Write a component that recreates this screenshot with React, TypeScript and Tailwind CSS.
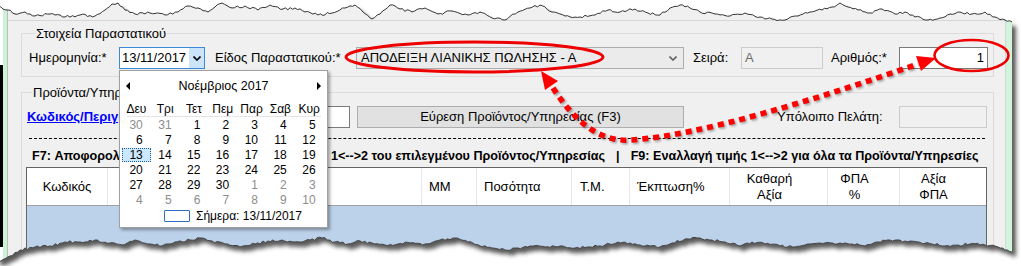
import React from "react";

type Pt = [number, number];

const topCtrl: Pt[] = [
  [-4, 6], [8, 10], [15, 14], [25, 12], [35, 16], [50, 14], [65, 17], [80, 15], [95, 16], [105, 10], [112, 4], [118, 3],
  [125, 10], [135, 14], [150, 13], [165, 15], [178, 12], [188, 6], [198, 8], [208, 12], [215, 7], [222, 3], [232, 8],
  [245, 6], [258, 10], [270, 5], [283, 9], [295, 8], [305, 12], [318, 15], [332, 13], [345, 8], [355, 5], [363, 12],
  [372, 19], [380, 14], [390, 5], [400, 9], [412, 12], [425, 8], [438, 14], [452, 11], [468, 15], [480, 12], [492, 18],
  [505, 20], [518, 12], [530, 8], [540, 5], [552, 12], [565, 16], [580, 17], [595, 15], [608, 10], [620, 12], [635, 9],
  [648, 13], [660, 15], [670, 8], [680, 5], [690, 8], [700, 12], [715, 14], [730, 16], [745, 13], [760, 17], [772, 19],
  [785, 20], [798, 16], [810, 12], [822, 10], [832, 7], [840, 3], [848, 7], [858, 10], [870, 13], [882, 9], [895, 14],
  [905, 12], [915, 17], [928, 20], [940, 18], [950, 14], [960, 12], [972, 14], [985, 12], [995, 17], [1005, 20], [1012, 22],
];

const bottomCtrl: Pt[] = [
  [-4, 262], [10, 256], [20, 250], [35, 247], [50, 246], [65, 242], [80, 242], [95, 240], [110, 243], [122, 245],
  [135, 240], [150, 244], [162, 246], [175, 242], [190, 240], [200, 238], [212, 241], [225, 244], [240, 247], [255, 244],
  [268, 241], [282, 240], [295, 242], [310, 240], [322, 238], [335, 242], [348, 244], [360, 241], [372, 243], [385, 245],
  [398, 244], [410, 243], [425, 244], [440, 240], [455, 238], [468, 242], [480, 246], [492, 248], [505, 250], [518, 248],
  [530, 246], [545, 247], [560, 246], [575, 248], [590, 247], [605, 245], [618, 242], [630, 243], [645, 246], [660, 247],
  [672, 243], [685, 239], [700, 238], [712, 240], [725, 242], [740, 246], [752, 242], [765, 244], [780, 246], [795, 247],
  [810, 244], [825, 243], [840, 243], [852, 244], [865, 246], [878, 242], [890, 240], [905, 241], [918, 242], [932, 244],
  [945, 246], [958, 245], [970, 244], [985, 245], [998, 247], [1005, 250], [1012, 252],
];

// break the control lines up into small jagged steps
function rough(ctrl: Pt[], seed: number, amp: number): Pt[] {
  let s = seed;
  const rnd = () => {
    s = (s * 16807) % 2147483647;
    return s / 2147483647;
  };
  const out: Pt[] = [];
  for (let i = 0; i < ctrl.length - 1; i++) {
    const [x0, y0] = ctrl[i];
    const [x1, y1] = ctrl[i + 1];
    const steps = Math.max(1, Math.round((x1 - x0) / 2.5));
    for (let k = 0; k < steps; k++) {
      const t = k / steps;
      const j = k === 0 ? 0 : (rnd() - 0.5) * amp;
      out.push([x0 + (x1 - x0) * t, y0 + (y1 - y0) * t + j]);
    }
  }
  out.push(ctrl[ctrl.length - 1]);
  return out;
}

const topPts = rough(topCtrl, 17, 2.4);
const bottomPts = rough(bottomCtrl, 91, 2.4);
const line = (pts: Pt[]) => pts.map(([x, y], i) => `${i ? "L" : "M"}${x.toFixed(1)},${y.toFixed(1)}`).join(" ");
const paper =
  line(topPts) +
  " " +
  [...bottomPts].reverse().map(([x, y]) => `L${x.toFixed(1)},${y.toFixed(1)}`).join(" ") +
  " Z";

const weeks: { d: number; out?: boolean }[][] = [
  [{ d: 30, out: true }, { d: 31, out: true }, { d: 1 }, { d: 2 }, { d: 3 }, { d: 4 }, { d: 5 }],
  [6, 7, 8, 9, 10, 11, 12].map((d) => ({ d })),
  [13, 14, 15, 16, 17, 18, 19].map((d) => ({ d })),
  [20, 21, 22, 23, 24, 25, 26].map((d) => ({ d })),
  [{ d: 27 }, { d: 28 }, { d: 29 }, { d: 30 }, { d: 1, out: true }, { d: 2, out: true }, { d: 3, out: true }],
  [4, 5, 6, 7, 8, 9, 10].map((d) => ({ d, out: true })),
];

const dayNames = ["Δευ", "Τρι", "Τετ", "Πεμ", "Παρ", "Σαβ", "Κυρ"];

function Chevron({ className }: { className?: string }) {
  return (
    <svg width="8" height="5" viewBox="0 0 8 5" className={className}>
      <polyline points="0.5,0.5 4,4 7.5,0.5" fill="none" stroke="currentColor" strokeWidth="1.6" />
    </svg>
  );
}

function Calendar() {
  return (
    <div className="absolute left-[119px] top-[70px] w-[209px] h-[158px] bg-white border border-[#a0a0a0] shadow-[2px_2px_3px_rgba(0,0,0,0.35)] text-[12px] leading-[14px] text-black">
      <div className="flex items-center justify-between h-[14px] mt-[8px] px-[6px]">
        <svg width="4" height="8" viewBox="0 0 4 8">
          <polygon points="4,0 0,4 4,8" fill="#000" />
        </svg>
        <span className="text-[12.5px]">Νοέμβριος 2017</span>
        <svg width="4" height="8" viewBox="0 0 4 8">
          <polygon points="0,0 4,4 0,8" fill="#000" />
        </svg>
      </div>
      <div className="ml-[2px] mt-[8px]">
        <div className="grid grid-cols-[repeat(7,28.8px)] h-[15px] items-center">
          {dayNames.map((n) => (
            <span key={n} className="text-center">
              {n}
            </span>
          ))}
        </div>
        <div className="h-px w-[194px] ml-[5px] bg-[#e4e4e4]" />
        {weeks.map((w, i) => (
          <div key={i} className="grid grid-cols-[repeat(7,28.8px)] h-[15px] items-center">
            {w.map((c, j) =>
              c.d === 13 && !c.out ? (
                <span key={j} className="h-[14px] text-right pr-[7px] bg-[#cce8ff] border border-dotted border-[#1c5e9e] leading-[12px]">
                  {c.d}
                </span>
              ) : (
                <span key={j} className={`text-right pr-[8px] ${c.out ? "text-[#8d8d8d]" : "text-black"}`}>
                  {c.d}
                </span>
              )
            )}
          </div>
        ))}
      </div>
      <div className="flex items-center h-[15px] mt-[1px] pl-[44px] gap-[6px]">
        <span className="w-[26px] h-[12px] border border-[#2a6fc4] rounded-[1px]" />
        <span>Σήμερα: 13/11/2017</span>
      </div>
    </div>
  );
}

const headers = [
  { label: ["Κωδικός"], cls: "w-[81px] justify-center" },
  { label: [""], cls: "w-[314px]" },
  { label: ["ΜΜ"], cls: "w-[55px] pl-[7px]" },
  { label: ["Ποσότητα"], cls: "w-[95px] pl-[7px]" },
  { label: ["Τ.Μ."], cls: "w-[58px] pl-[8px]" },
  { label: ["Έκπτωση%"], cls: "w-[100px] pl-[7px]" },
  { label: ["Καθαρή", "Αξία"], cls: "w-[98px] justify-center pr-[18px]" },
  { label: ["ΦΠΑ", "%"], cls: "w-[72px] justify-center pr-[18px]" },
  { label: ["Αξία", "ΦΠΑ"], cls: "flex-1 justify-center pr-[19px]" },
];

export default function App() {
  return (
    <div className="relative w-[1021px] h-[266px] overflow-hidden bg-white font-['Liberation_Sans',Arial,sans-serif] text-[13px] text-black">
      <div className="flex h-full w-[1012px]">
        <div className="w-[3px] flex flex-col">
          <div className="h-[65px] bg-white" />
          <div className="h-[182px] bg-black" />
        </div>
        <div className="w-[5px] bg-[#cef2d7] border-r border-[#bcbcbc]" />
        <div className="flex-1 bg-[#f0f0f0] pt-[20px]">
          <div className="h-full border-t border-r border-[#d6d6d6] pl-[13px] pr-[11px]">
            <fieldset className="mt-[5px] border border-[#dcdcdc] pl-[7px] pr-[4px] pb-[7px]">
              <legend className="ml-[6px] px-[1px] leading-[15px]">Στοιχεία Παραστατικού</legend>
              <div className="flex items-center h-[22px] mt-[6px]">
                <span className="w-[90px]">Ημερομηνία:*</span>
                <div className="flex w-[86px] h-[22px] border border-[#3b8ad9] bg-white">
                  <span className="flex-1 pl-[2px] leading-[20px]">13/11/2017</span>
                  <span className="w-[15px] bg-[#cce4f7] flex items-center justify-center text-black">
                    <Chevron />
                  </span>
                </div>
                <span className="ml-[10px] w-[141px]">Είδος Παραστατικού:*</span>
                <div className="flex items-center w-[328px] h-[22px] border border-[#adadad] bg-[#ebebeb] pl-[4px] pr-[6px]">
                  <span className="flex-1">ΑΠΟΔΕΙΞΗ ΛΙΑΝΙΚΗΣ ΠΩΛΗΣΗΣ - Α</span>
                  <Chevron className="text-[#606060]" />
                </div>
                <span className="ml-[9px] w-[48px]">Σειρά:</span>
                <div className="w-[82px] h-[22px] border border-[#cccccc] bg-[#f0f0f0] pl-[3px] leading-[20px] text-[#6d6d6d]">Α</div>
                <span className="ml-[8px] w-[68px]">Αριθμός:*</span>
                <div className="w-[89px] h-[22px] border border-[#7a7a7a] bg-white pr-[3px] text-right leading-[20px]">1</div>
              </div>
            </fieldset>

            <fieldset className="mt-[8px] h-[200px] border border-[#dcdcdc] pl-[4px] pr-[5px]">
              <legend className="ml-[6px] px-[1px] leading-[15px]">Προϊόντα/Υπηρεσίες</legend>
              <div className="flex items-center h-[22px] mt-[6px] pl-[1px]">
                <span className="w-[163px] font-bold text-[#0000ff] underline">Κωδικός/Περιγραφή</span>
                <div className="w-[160px] h-[22px] border border-[#7a7a7a] bg-white" />
                <div className="ml-[7px] w-[327px] h-[22px] border border-[#adadad] bg-[#e1e1e1] flex items-center justify-center">
                  Εύρεση Προϊόντος/Υπηρεσίας (F3)
                </div>
                <span className="ml-[93px] w-[122px]">Υπόλοιπο Πελάτη:</span>
                <div className="w-[88px] h-[22px] border border-[#cccccc] bg-[#f0f0f0]" />
              </div>
              <div className="mt-[10px] ml-[3px] w-[956px] border-t border-dashed border-black" />
              <div className="mt-[10px] ml-[6px] text-[12.6px] leading-[14px] font-bold whitespace-nowrap flex">
                <span className="w-[299px] overflow-hidden">F7: Αποφορολόγηση τιμής</span>
                <span>1&lt;--&gt;2 του επιλεγμένου Προϊόντος/Υπηρεσίας</span>
                <span className="ml-[11px]">|</span>
                <span className="ml-[11px]">F9: Εναλλαγή τιμής 1&lt;--&gt;2 για όλα τα Προϊόντα/Υπηρεσίες</span>
              </div>
              <div className="mt-[4px] border border-[#646464] w-[961px]">
                <div className="flex h-[38px] bg-white border-b border-[#a0a0a0]">
                  {headers.map((h, i) => (
                    <div
                      key={i}
                      className={`flex items-center ${i < headers.length - 1 ? "border-r border-[#e3e8ef]" : ""} ${h.cls}`}
                    >
                      <div className="text-center leading-[16px]">
                        {h.label.map((l, k) => (
                          <div key={k}>{l}</div>
                        ))}
                      </div>
                    </div>
                  ))}
                </div>
                <div className="h-[60px] bg-[#bcd1ea]" />
              </div>
            </fieldset>
          </div>
        </div>
        <div className="w-[6px] bg-[#d2f4db]" />
      </div>

      <Calendar />

      <svg className="absolute inset-0 pointer-events-none" width="1021" height="266" viewBox="0 0 1021 266">
        <defs>
          <filter id="blur2" x="-5%" y="-20%" width="110%" height="140%">
            <feGaussianBlur stdDeviation="2" />
          </filter>
          <filter id="blur1">
            <feGaussianBlur stdDeviation="0.8" />
          </filter>
          <mask id="outside">
            <rect x="0" y="0" width="1021" height="266" fill="white" />
            <path d={paper} fill="black" />
          </mask>
        </defs>
        <path d={`M-10,-10 H1031 V276 H-10 Z ${paper}`} fill="#fff" fillRule="evenodd" />
        <g mask="url(#outside)">
          <path d={paper} transform="translate(4,5)" fill="#222" opacity="0.75" filter="url(#blur2)" />
        </g>
        <path d={line(topPts)} fill="none" stroke="#333" strokeWidth="1" />
        <path d={line(bottomPts)} fill="none" stroke="#444" strokeWidth="1" />

        <ellipse cx="474.5" cy="57" rx="128.5" ry="15" fill="none" stroke="#ee0000" strokeWidth="3" />
        <ellipse cx="971.5" cy="55.5" rx="37" ry="15.5" fill="none" stroke="#ee0000" strokeWidth="2.6" />

        <path
          d="M553,88 C575,122 600,142 630,140 C700,136 820,98 918,64"
          fill="none"
          stroke="#000"
          strokeOpacity="0.35"
          strokeWidth="5.5"
          strokeDasharray="6 5"
          transform="translate(1.5,1.5)"
          filter="url(#blur1)"
        />
        <path
          d="M553,88 C575,122 600,142 630,140 C700,136 820,98 918,64"
          fill="none"
          stroke="#ff0000"
          strokeWidth="5.5"
          strokeDasharray="6 5"
        />
        <polygon points="541,71 558,81 545,90" fill="#ff0000" />
        <polygon points="936,58 916,56 921,71" fill="#ff0000" />
      </svg>
    </div>
  );
}
